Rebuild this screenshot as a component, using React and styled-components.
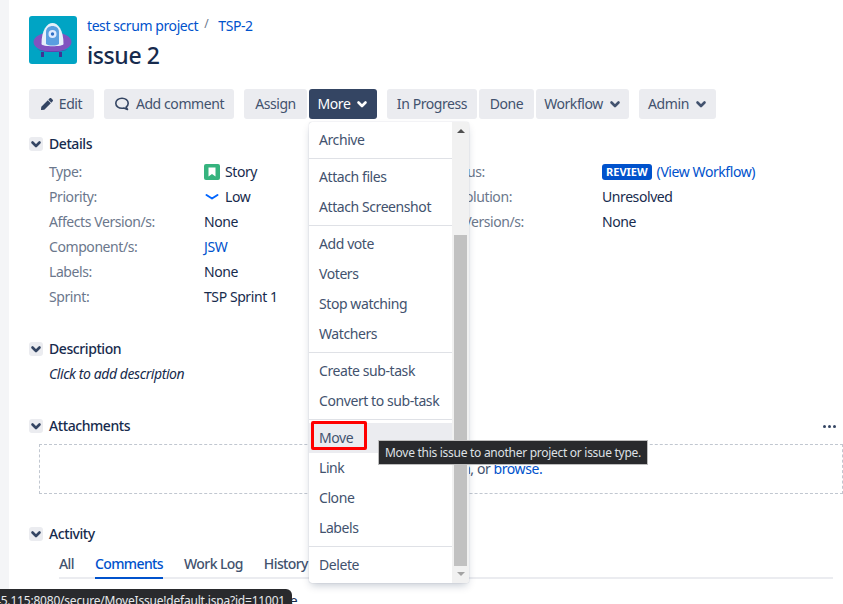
import React from 'react';
import styled, { createGlobalStyle } from 'styled-components';
import { FaPen } from 'react-icons/fa';

const GlobalStyle = createGlobalStyle`
  html, body {
    margin: 0;
    height: 604px;
    overflow: hidden;
    background: #fff;
  }
  body {
    font-family: "Noto Sans", "Open Sans", sans-serif;
    font-size: 14px;
    line-height: 20px;
    color: #172b4d;
    letter-spacing: -0.42px;
  }
`;

const Page = styled.div`
  position: relative;
  width: 843px;
  height: 604px;
  overflow: hidden;
  display: flex;
`;

const Gutter = styled.div`
  width: 9px;
  flex: none;
  background: #f4f5f7;
`;

const Main = styled.main`
  flex: 1;
  min-width: 0;
  padding: 16px 0 0 20px;
`;

const Header = styled.header`
  display: flex;
  gap: 10px;
`;

const Crumbs = styled.div`
  display: flex;
  align-items: flex-start;
  height: 25px;
`;

const Slash = styled.span`
  color: #6b778c;
  font-size: 12px;
  line-height: 16px;
  margin: 0 10px 0 6px;
`;

const Link = styled.a`
  color: #0052cc;
  text-decoration: none;
`;

const Title = styled.h1`
  margin: 0;
  font-size: 23px;
  line-height: 28px;
  font-weight: 500;
  letter-spacing: -0.4px;
`;

const Toolbar = styled.div`
  display: flex;
  gap: 10px;
  margin-top: 20px;
`;

const ButtonGroup = styled.div`
  display: flex;
  gap: ${(p) => p.$gap || 2}px;
`;

const Button = styled.div`
  width: ${(p) => p.$w}px;
  height: 30px;
  display: flex;
  align-items: center;
  justify-content: center;
  gap: 6px;
  border-radius: 3px;
  background: ${(p) => (p.$active ? '#344563' : '#ebecf0')};
  color: ${(p) => (p.$active ? '#fff' : '#42526e')};
`;

const Chevron = ({ size = 12, color = 'currentColor', width = 2.6 }) => (
  <svg width={size} height={size} viewBox="0 0 12 12" fill="none">
    <path d="M2.5 4.5 6 8l3.5-3.5" stroke={color} strokeWidth={width} strokeLinecap="round" strokeLinejoin="round" />
  </svg>
);

const SectionHead = styled.div`
  display: flex;
  align-items: center;
  height: 20px;
  gap: 6px;
  margin-top: ${(p) => p.$top}px;
  font-weight: 500;
  color: #172b4d;
`;

const Toggle = styled.span`
  width: 14px;
  height: 14px;
  border-radius: 3px;
  background: #ebecf0;
  color: #344563;
  display: flex;
  align-items: center;
  justify-content: center;
`;

const HeadRow = styled.div`
  display: flex;
  justify-content: space-between;
  align-items: center;
  padding-right: 7px;
`;

const Dots = styled.div`
  display: flex;
  gap: 2px;
  margin-top: ${(p) => p.$top}px;
`;

const Dot = styled.i`
  width: 3px;
  height: 3px;
  background: #344563;
  border-radius: 50%;
`;

const DetailsGrid = styled.dl`
  display: grid;
  grid-template-columns: 155px 239px 159px 1fr;
  grid-auto-rows: 20px;
  row-gap: 5px;
  margin: 8px 0 0 20px;
`;

const Label = styled.dt`
  color: #6b778c;
`;

const Value = styled.dd`
  margin: 0;
  display: flex;
  align-items: center;
  gap: 5px;
`;

const Lozenge = styled.span`
  background: #0052cc;
  color: #fff;
  border-radius: 3px;
  font-size: 11px;
  font-weight: 700;
  line-height: 16px;
  padding: 0 4px;
  letter-spacing: 0;
`;

const Body = styled.p`
  margin: 5px 0 0 20px;
  font-style: italic;
`;

const DropZone = styled.div`
  height: 50px;
  box-sizing: border-box;
  margin: 8px 0 0 10px;
  border: 1px dashed #c1c7d0;
  display: flex;
  align-items: center;
  justify-content: center;
  padding-left: 14px;
  color: #42526e;
`;

const Tabs = styled.nav`
  display: flex;
  gap: 21px;
  height: 25px;
  box-sizing: border-box;
  margin: 10px 10px 0 30px;
  border-bottom: 2px solid #ebecf0;
`;

const Tab = styled.a`
  height: 25px;
  box-sizing: border-box;
  font-weight: 500;
  letter-spacing: -0.6px;
  color: ${(p) => (p.$active ? '#0052cc' : '#42526e')};
  border-bottom: 2px solid ${(p) => (p.$active ? '#0052cc' : 'transparent')};
`;

const Comment = styled.p`
  margin: 12px 0 0 30px;
  white-space: nowrap;
  letter-spacing: -0.72px;
`;

const Menu = styled.div`
  position: absolute;
  left: 309px;
  top: 122px;
  width: 160px;
  height: 461px;
  display: flex;
  background: #fff;
  border-radius: 3px;
  overflow: hidden;
  box-shadow: 0 4px 8px -2px rgba(9, 30, 66, 0.25), 0 0 1px rgba(9, 30, 66, 0.31);
`;

const MenuList = styled.div`
  flex: 1;
  min-width: 0;
`;

const MenuGroup = styled.div`
  padding: 3px 0;
  & + & {
    border-top: 1px solid #dfe1e6;
  }
`;

const MenuItem = styled.div`
  position: relative;
  height: 30px;
  line-height: 30px;
  padding-left: 10px;
  color: #42526e;
  background: ${(p) => (p.$hover ? '#ebecf0' : 'transparent')};
`;

const Highlight = styled.span`
  position: absolute;
  left: 2px;
  top: -2px;
  width: 56px;
  height: 29px;
  box-sizing: border-box;
  border: 3px solid #f00;
  border-radius: 2px;
`;

const ScrollTrack = styled.div`
  width: 17px;
  flex: none;
  background: #f1f1f1;
  display: flex;
  flex-direction: column;
  align-items: center;
`;

const ScrollArrow = styled.i`
  width: 0;
  height: 0;
  margin-top: ${(p) => p.$top}px;
  border-left: 4px solid transparent;
  border-right: 4px solid transparent;
  ${(p) => (p.$down ? 'border-top: 4px solid #a3a3a3;' : 'border-bottom: 4px solid #505050;')}
`;

const ScrollThumb = styled.div`
  width: 13px;
  height: 331px;
  margin-top: 102px;
  background: #c1c1c1;
`;

const Tooltip = styled.div`
  position: absolute;
  left: 378px;
  top: 440px;
  width: 270px;
  height: 25px;
  box-sizing: border-box;
  border: 1px solid #bdbdbd;
  background: #292a2d;
  color: #dfe1e6;
  font-size: 12px;
  line-height: 23px;
  text-align: center;
  letter-spacing: -0.28px;
  white-space: nowrap;
`;

const StatusBubble = styled.div`
  position: absolute;
  left: 0;
  top: 589px;
  width: 292px;
  height: 22px;
  box-sizing: border-box;
  padding-right: 7px;
  background: #292a2d;
  border-top-right-radius: 6px;
  color: #e8eaed;
  font-size: 12px;
  line-height: 24px;
  letter-spacing: -0.2px;
  display: flex;
  justify-content: flex-end;
  overflow: hidden;
  white-space: nowrap;
`;

const ProjectAvatar = () => (
  <svg width="48" height="48" viewBox="0 0 48 48" style={{ flex: 'none' }}>
    <rect width="48" height="48" rx="3" fill="#00a4c4" />
    <path d="M12 36h3v5h-3zM30 36h3v5h-3z" fill="#403294" />
    <ellipse cx="23.500" cy="26" rx="19" ry="10" fill="#8052c0" />
    <path d="M8 33c6 3 25 3 31 0-5 4-26 4-31 0z" fill="#5e3aa8" />
    <path d="M12.500 28C12.500 0 34.500 0 34.500 28c0 3-22 3-22 0z" fill="#e6f0fa" />
    <path d="M17 28V16c0-8 13-8 13 0v12c-3 2-10 2-13 0z" fill="#5a9fe0" />
    <circle cx="23.500" cy="18" r="4" fill="#deebff" />
    <circle cx="23.500" cy="18" r="1.700" fill="#2f6fc4" />
  </svg>
);

const CommentIcon = () => (
  <svg width="16" height="16" viewBox="0 0 16 16" fill="none">
    <path d="M8 2.200c3.500 0 6.200 2.200 6.200 5.100 0 1.600-.8 3-2.100 3.900l1.400 2.300-3.600-1.500c-.6.2-1.200.3-1.900.3-3.500 0-6.200-2.200-6.200-5S4.500 2.200 8 2.200z" stroke="#344563" strokeWidth="1.600" strokeLinejoin="round" />
  </svg>
);

const StoryIcon = () => (
  <svg width="16" height="16" viewBox="0 0 16 16">
    <rect width="16" height="16" rx="2" fill="#36b37e" />
    <path d="M4.500 3.500h7v9L8 10l-3.500 2.500z" fill="#fff" />
  </svg>
);

const LowIcon = () => (
  <svg width="16" height="16" viewBox="0 0 16 16" fill="none">
    <path d="M2.500 6 8 9.500 13.500 6" stroke="#0065ff" strokeWidth="2" strokeLinecap="round" strokeLinejoin="round" />
  </svg>
);

const menuGroups = [
  ['Archive'],
  ['Attach files', 'Attach Screenshot'],
  ['Add vote', 'Voters', 'Stop watching', 'Watchers'],
  ['Create sub-task', 'Convert to sub-task'],
  ['Move', 'Link', 'Clone', 'Labels'],
  ['Delete'],
];

const App = () => {
  return (
    <Page>
      <GlobalStyle />
      <Gutter />
      <Main>
        <Header>
          <ProjectAvatar />
          <div>
            <Crumbs>
              <Link>test scrum project</Link>
              <Slash>/</Slash>
              <Link>TSP-2</Link>
            </Crumbs>
            <Title>issue 2</Title>
          </div>
        </Header>

        <Toolbar>
          <Button $w={65}><FaPen size={12} color="#344563" />Edit</Button>
          <Button $w={130}><CommentIcon />Add comment</Button>
          <ButtonGroup $gap={2}>
            <Button $w={63}>Assign</Button>
            <Button $w={68} $active>More<Chevron /></Button>
          </ButtonGroup>
          <ButtonGroup>
            <Button $w={90}>In Progress</Button>
            <Button $w={55}>Done</Button>
            <Button $w={93}>Workflow<Chevron /></Button>
          </ButtonGroup>
          <Button $w={77}>Admin<Chevron /></Button>
        </Toolbar>

        <SectionHead $top={15}><Toggle><Chevron /></Toggle>Details</SectionHead>
        <DetailsGrid>
          <Label>Type:</Label>
          <Value><StoryIcon />Story</Value>
          <Label>Status:</Label>
          <Value><Lozenge>REVIEW</Lozenge><Link>(View Workflow)</Link></Value>
          <Label>Priority:</Label>
          <Value><LowIcon />Low</Value>
          <Label>Resolution:</Label>
          <Value>Unresolved</Value>
          <Label>Affects Version/s:</Label>
          <Value>None</Value>
          <Label>Fix Version/s:</Label>
          <Value>None</Value>
          <Label>Component/s:</Label>
          <Value><Link>JSW</Link></Value>
          <span />
          <span />
          <Label>Labels:</Label>
          <Value>None</Value>
          <span />
          <span />
          <Label>Sprint:</Label>
          <Value>TSP Sprint 1</Value>
        </DetailsGrid>

        <SectionHead $top={32}><Toggle><Chevron /></Toggle>Description</SectionHead>
        <Body>Click to add description</Body>

        <HeadRow>
          <SectionHead $top={32}><Toggle><Chevron /></Toggle>Attachments</SectionHead>
          <Dots $top={32}><Dot /><Dot /><Dot /></Dots>
        </HeadRow>
        <DropZone>
          <span>Drop files to attach, or <Link>browse.</Link></span>
        </DropZone>

        <SectionHead $top={30}><Toggle><Chevron /></Toggle>Activity</SectionHead>
        <Tabs>
          <Tab>All</Tab>
          <Tab $active>Comments</Tab>
          <Tab>Work Log</Tab>
          <Tab>History</Tab>
        </Tabs>
        <Comment>There are no comments yet on this issue.</Comment>
      </Main>

      <Menu>
        <MenuList>
          {menuGroups.map((group) => (
            <MenuGroup key={group[0]}>
              {group.map((item) => (
                <MenuItem key={item} $hover={item === 'Move'}>
                  {item}
                  {item === 'Move' && <Highlight />}
                </MenuItem>
              ))}
            </MenuGroup>
          ))}
        </MenuList>
        <ScrollTrack>
          <ScrollArrow $top={7} />
          <ScrollThumb />
          <ScrollArrow $down $top={6} />
        </ScrollTrack>
      </Menu>

      <Tooltip>Move this issue to another project or issue type.</Tooltip>
      <StatusBubble>http://10.10.245.115:8080/secure/MoveIssue!default.jspa?id=11001</StatusBubble>
    </Page>
  );
};

export default App;
